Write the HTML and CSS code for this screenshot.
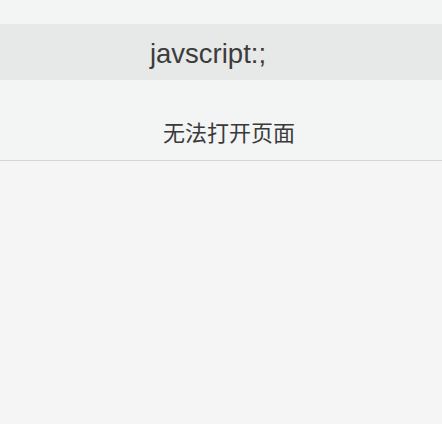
FILE: index.html
```html
<!DOCTYPE html>
<html lang="zh-CN">
<head>
<meta charset="utf-8">
<link rel="stylesheet" href="styles.css">
</head>
<body>
<div class="page">
  <div class="top-strip"></div>
  <div class="url-bar"><span class="url-text">javscript:;</span></div>
  <div class="message"><span class="message-text">无法打开页面</span></div>
  <div class="content"></div>
</div>
</body>
</html>
```

FILE: styles.css
```css
html, body {
  margin: 0;
  padding: 0;
  height: 100%;
}
body {
  background: #f5f5f5;
  font-family: "Liberation Sans", "Noto Sans CJK SC", sans-serif;
  color: #3a3a3a;
}
.page {
  display: flex;
  flex-direction: column;
  height: 100%;
}
.top-strip {
  height: 24px;
  background: #f3f4f4;
}
.url-bar {
  height: 56px;
  background: #e7e8e8;
  display: flex;
  align-items: center;
  justify-content: center;
  padding-top: 4px;
  box-sizing: border-box;
}
.url-text {
  font-size: 27.5px;
  margin-left: -26px;
  color: #3c3c3c;
}
.message {
  height: 81px;
  background: #f3f4f4;
  border-bottom: 1px solid #d4d4d4;
  box-sizing: border-box;
  display: flex;
  align-items: center;
  justify-content: center;
  padding-top: 22px;
}
.message-text {
  font-family: "Noto Sans CJK SC", sans-serif;
  font-size: 22px;
  margin-left: 16px;
  color: #3a3a3a;
}
.content {
  flex: 1;
  background: #f5f5f5;
}
```
